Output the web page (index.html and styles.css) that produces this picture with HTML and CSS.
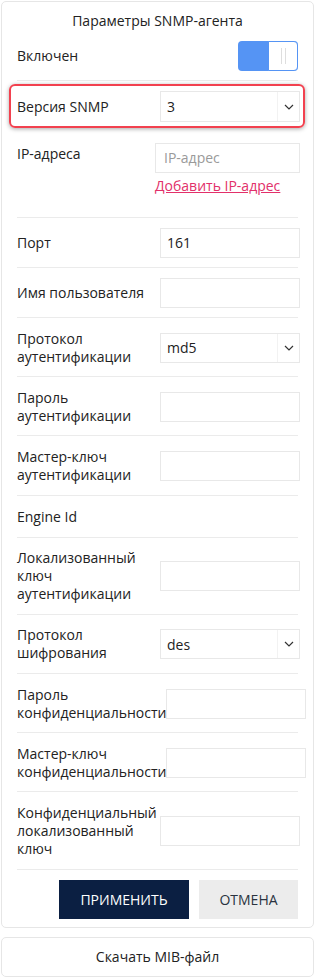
FILE: index.html
```html
<!DOCTYPE html>
<html>
	<head>
		<meta charset="utf-8">
		<title>Параметры SNMP-агента</title>
		<link rel="stylesheet" href="styles.css">
	</head>
	<body>
		<div class="panel">
			<div class="panel-title">Параметры SNMP-агента</div>

			<div class="row">
				<div class="label">Включен</div>
				<div class="toggle">
					<div class="toggle-fill"></div>
					<div class="toggle-knob">
						<span class="grip"></span>
						<span class="grip"></span>
					</div>
				</div>
			</div>

			<div class="row row-highlight">
				<div class="label">Версия SNMP</div>
				<div class="select">
					<span class="select-value">3</span>
					<span class="select-arrow">
						<svg width="10" height="6" viewBox="0 0 10 6"><polyline points="1,1 5,5 9,1" fill="none" stroke="#333" stroke-width="1.2"/></svg>
					</span>
				</div>
			</div>

			<div class="row row-top">
				<div class="label">IP-адреса</div>
				<div class="field-group">
					<div class="input placeholder">IP-адрес</div>
					<a class="add-link" href="#">Добавить IP-адрес</a>
				</div>
			</div>

			<div class="row">
				<div class="label">Порт</div>
				<div class="input">161</div>
			</div>

			<div class="row">
				<div class="label">Имя пользователя</div>
				<div class="input"></div>
			</div>

			<div class="row">
				<div class="label">Протокол аутентификации</div>
				<div class="select">
					<span class="select-value">md5</span>
					<span class="select-arrow">
						<svg width="10" height="6" viewBox="0 0 10 6"><polyline points="1,1 5,5 9,1" fill="none" stroke="#333" stroke-width="1.2"/></svg>
					</span>
				</div>
			</div>

			<div class="row">
				<div class="label">Пароль аутентификации</div>
				<div class="input"></div>
			</div>

			<div class="row">
				<div class="label">Мастер-ключ аутентификации</div>
				<div class="input"></div>
			</div>

			<div class="row">
				<div class="label">Engine Id</div>
			</div>

			<div class="row">
				<div class="label">Локализованный ключ аутентификации</div>
				<div class="input"></div>
			</div>

			<div class="row">
				<div class="label">Протокол шифрования</div>
				<div class="select">
					<span class="select-value">des</span>
					<span class="select-arrow">
						<svg width="10" height="6" viewBox="0 0 10 6"><polyline points="1,1 5,5 9,1" fill="none" stroke="#333" stroke-width="1.2"/></svg>
					</span>
				</div>
			</div>

			<div class="row">
				<div class="label">Пароль конфиденциальности</div>
				<div class="input"></div>
			</div>

			<div class="row">
				<div class="label">Мастер-ключ конфиденциальности</div>
				<div class="input"></div>
			</div>

			<div class="row">
				<div class="label">Конфиденциальный локализованный ключ</div>
				<div class="input"></div>
			</div>

			<div class="actions">
				<button type="button" class="btn btn-primary">ПРИМЕНИТЬ</button>
				<button type="button" class="btn btn-cancel">ОТМЕНА</button>
			</div>
		</div>

		<div class="panel panel-download">Скачать MIB-файл</div>
	</body>
</html>
```

FILE: styles.css
```css
html {
	font-size: 14px;
}

body {
	margin: 0;
	padding: 1px 1px 0;
	font-family: "Open Sans", "Noto Sans", sans-serif;
	font-size: 14px;
	color: #222;
	background-color: #fff;
}

.panel {
	border: 1px solid #e6e6e6;
	border-radius: 5px;
	padding: 0 15px 8px;
	background-color: #fff;
}

.panel-title {
	text-align: center;
	line-height: 20px;
	padding-top: 9px;
}

/* строка формы */
.row {
	display: flex;
	align-items: center;
	padding: 10px 0 9px;
	border-bottom: 1px solid #ebebeb;
}

.row-top {
	align-items: flex-start;
}

.label {
	flex: 0 0 143px;
	line-height: 18px;
	padding: 1.6px 0;
}

.row > .label:only-child {
	flex: 1;
	padding: 2px 0;
}

/* выделенная строка */
.row-highlight {
	margin: 3px -7px 5px -8px;
	padding: 5px 5px 4px 6px;
	border: 2px solid #f2414f;
	border-radius: 6px;
	box-shadow: 0 1px 4px rgba(0, 0, 0, 0.35);
}

.input,
.select {
	box-sizing: border-box;
	width: 140px;
	height: 30px;
	flex-shrink: 0;
	border: 1px solid #e8e8e8;
	background-color: #fff;
}

.input {
	padding: 0 6px;
	line-height: 28px;
}

.placeholder {
	color: #9a9a9a;
}

.row-highlight .select {
	height: 31px;
}

.select {
	display: flex;
	align-items: center;
}

.select-value {
	flex: 1;
	padding-left: 6px;
}

.select-arrow {
	width: 21px;
	height: 100%;
	border-left: 1px solid #f2f2f2;
	display: flex;
	align-items: center;
	justify-content: center;
}

.field-group {
	flex-shrink: 0;
	width: 145px;
	margin-left: -5px;
}

.field-group .input {
	width: 145px;
	padding-left: 8px;
}

.add-link {
	display: block;
	margin: 4px 0 13px;
	line-height: 18px;
	color: #e2306a;
	text-decoration: underline;
}

/* переключатель */
.toggle {
	margin-left: auto;
	width: 60px;
	height: 30px;
	display: flex;
	border-radius: 4px;
	background-color: #5594f4;
	overflow: hidden;
}

.toggle-fill {
	flex: 1;
}

.toggle-knob {
	box-sizing: border-box;
	width: 30px;
	height: 100%;
	background-color: #fff;
	border: 1px solid #5594f4;
	border-radius: 0 4px 4px 0;
	display: flex;
	align-items: center;
	justify-content: center;
	gap: 3px;
}

.grip {
	width: 1px;
	height: 16px;
	background-color: #dedede;
}

/* кнопки */
.actions {
	display: flex;
	justify-content: flex-end;
	gap: 10px;
	padding-top: 10px;
}

.btn {
	height: 39px;
	border: none;
	border-radius: 0;
	font-family: "Open Sans", "Noto Sans", sans-serif;
	font-size: 14px;
	padding: 0;
}

.btn-primary {
	width: 130px;
	background-color: #0b1f42;
	color: #fff;
}

.btn-cancel {
	width: 99px;
	background-color: #ececec;
	color: #2a3340;
}

.panel-download {
	margin-top: 9px;
	padding: 0;
	height: 38px;
	line-height: 38px;
	text-align: center;
}
```
